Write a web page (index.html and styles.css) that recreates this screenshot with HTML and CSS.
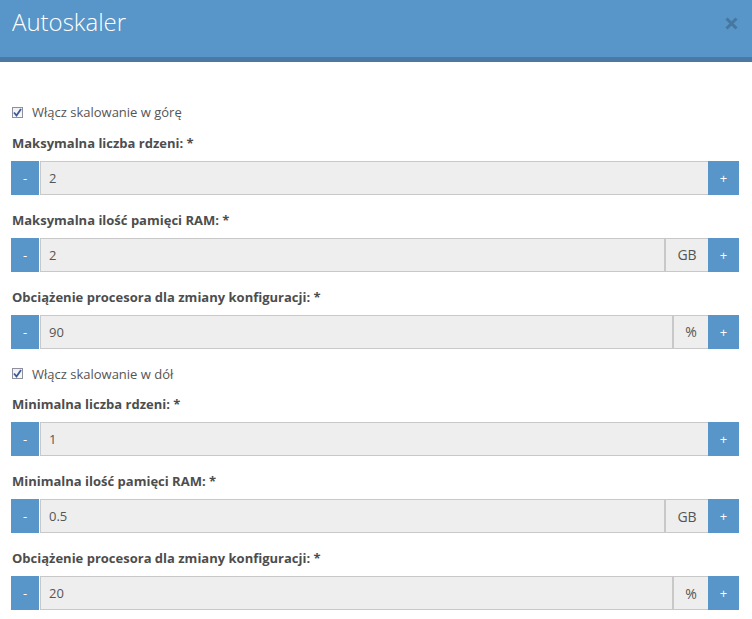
FILE: index.html
```html
<!DOCTYPE html>
<html lang="pl">
<head>
<meta charset="utf-8">
<title>Autoskaler</title>
<link rel="stylesheet" href="styles.css">
</head>
<body>
<div class="modal">
  <div class="modal-header">
    <h1 class="modal-title">Autoskaler</h1>
    <span class="close" aria-label="Zamknij">
      <svg width="13" height="13" viewBox="0 0 13 13"><path d="M1.5 1.5 L11.5 11.5 M11.5 1.5 L1.5 11.5" stroke="#4677a0" stroke-width="3" stroke-linecap="butt"/></svg>
    </span>
  </div>
  <div class="modal-body">
    <label class="check">
      <span class="box"><svg width="9" height="9" viewBox="0 0 9 9"><path d="M1 4.5 L3.5 7.5 L8 1" fill="none" stroke="#3b5a9a" stroke-width="1.8"/></svg></span>
      <span>Włącz skalowanie w górę</span>
    </label>

    <div class="group">
      <div class="label">Maksymalna liczba rdzeni: *</div>
      <div class="spinner">
        <span class="btn">-</span>
        <span class="field">2</span>
        <span class="btn">+</span>
      </div>
    </div>

    <div class="group">
      <div class="label">Maksymalna ilość pamięci RAM: *</div>
      <div class="spinner">
        <span class="btn">-</span>
        <span class="field">2</span>
        <span class="addon addon-gb">GB</span>
        <span class="btn">+</span>
      </div>
    </div>

    <div class="group">
      <div class="label">Obciążenie procesora dla zmiany konfiguracji: *</div>
      <div class="spinner">
        <span class="btn">-</span>
        <span class="field">90</span>
        <span class="addon addon-pct">%</span>
        <span class="btn">+</span>
      </div>
    </div>

    <label class="check">
      <span class="box"><svg width="9" height="9" viewBox="0 0 9 9"><path d="M1 4.5 L3.5 7.5 L8 1" fill="none" stroke="#3b5a9a" stroke-width="1.8"/></svg></span>
      <span>Włącz skalowanie w dół</span>
    </label>

    <div class="group">
      <div class="label">Minimalna liczba rdzeni: *</div>
      <div class="spinner">
        <span class="btn">-</span>
        <span class="field">1</span>
        <span class="btn">+</span>
      </div>
    </div>

    <div class="group">
      <div class="label">Minimalna ilość pamięci RAM: *</div>
      <div class="spinner">
        <span class="btn">-</span>
        <span class="field">0.5</span>
        <span class="addon addon-gb">GB</span>
        <span class="btn">+</span>
      </div>
    </div>

    <div class="group">
      <div class="label">Obciążenie procesora dla zmiany konfiguracji: *</div>
      <div class="spinner">
        <span class="btn">-</span>
        <span class="field">20</span>
        <span class="addon addon-pct">%</span>
        <span class="btn">+</span>
      </div>
    </div>
  </div>
</div>
</body>
</html>
```

FILE: styles.css
```css
* { box-sizing: border-box; }
html, body { margin: 0; padding: 0; background: #fff; }
body {
  font-family: "Open Sans", "Noto Sans", sans-serif;
  font-size: 13px;
  color: #555;
}
.modal-header {
  height: 62px;
  background: #5895c8;
  border-bottom: 5px solid #4a7aa4;
  display: flex;
  justify-content: space-between;
  align-items: flex-start;
  padding: 6px 14px 0 12px;
}
.modal-title {
  margin: 0;
  font-size: 24px;
  font-weight: 300;
  line-height: 32px;
  color: #fff;
}
.close {
  display: flex;
  margin-top: 11px;
}
.modal-body {
  padding: 40px 13px 0 11px;
}
.check {
  display: flex;
  align-items: center;
  height: 20px;
  line-height: 20px;
  margin-bottom: 10.5px;
  padding-left: 1px;
}
.box {
  width: 11px;
  height: 11px;
  border: 1px solid #8f8f9d;
  background: linear-gradient(#f0f0f0, #fafafa);
  display: flex;
  align-items: center;
  justify-content: center;
  margin-right: 9px;
}
.group {
  margin-bottom: 15px;
}
.label {
  font-weight: 700;
  line-height: 20px;
  margin-bottom: 8px;
  padding-left: 1px;
  color: #4d4d4d;
}
.spinner {
  display: flex;
  height: 34px;
}
.btn {
  width: 28px;
  flex: none;
  background: #5895c8;
  color: #fff;
  display: flex;
  align-items: center;
  justify-content: center;
  font-size: 13px;
}
.btn:first-child { margin-right: 1px; }
.btn:last-child { width: 31px; }
.field {
  flex: 1;
  background: #eee;
  border: 1px solid #c8c8c8;
  border-right: none;
  display: flex;
  align-items: center;
  padding-left: 8px;
  color: #555;
}
.addon {
  flex: none;
  background: #eee;
  border: 1px solid #c8c8c8;
  border-right: none;
  border-left-width: 2px;
  display: flex;
  align-items: center;
  justify-content: center;
  color: #555;
  font-size: 14px;
}
.addon-gb { width: 44px; }
.addon-pct { width: 36px; }
```
